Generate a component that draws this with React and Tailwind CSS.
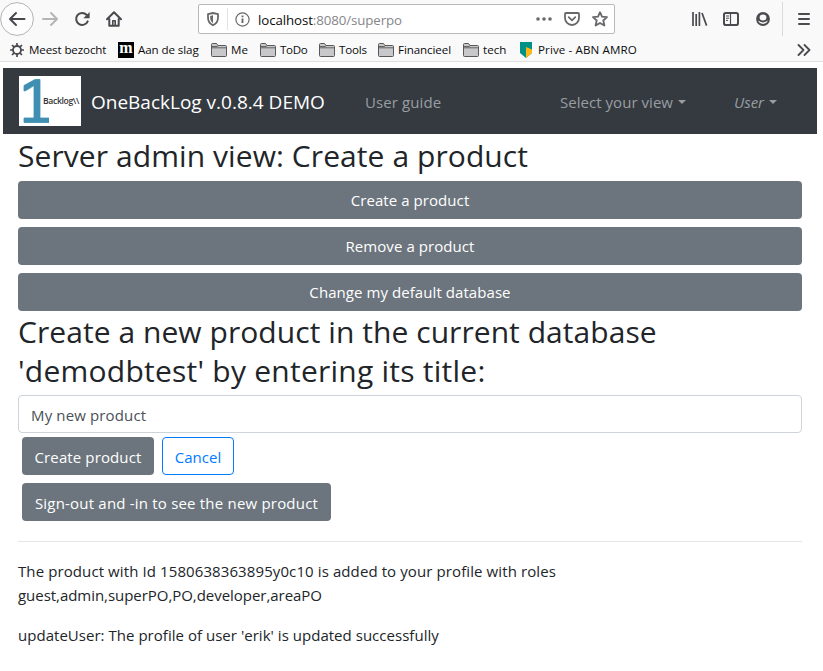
import React from "react";

const ui = "font-['Open_Sans','Noto_Sans',sans-serif]";

function Folder() {
  return (
    <svg width="16" height="14" viewBox="0 0 16 14" className="shrink-0">
      <path d="M.5 12.5V1.5Q.5.5 1.5.5H5.5L7 2.5H14.5Q15.5 2.5 15.5 3.5V12.5Q15.5 13.5 14.5 13.5H1.5Q.5 13.5.5 12.5Z" fill="#c8c8ca" stroke="#58585a" />
      <path d="M1 3.5H6L7.2 2.8M1 4.8H15" fill="none" stroke="#58585a" strokeWidth=".9" />
    </svg>
  );
}

function Gear() {
  return (
    <svg width="14" height="14" viewBox="0 0 14 14" className="shrink-0" fill="none" stroke="#4a4a4f">
      <circle cx="7" cy="7" r="4" strokeWidth="1.8" />
      <path d="M7 0V3M7 11V14M0 7H3M11 7H14M2 2L4.2 4.2M9.8 9.8L12 12M12 2L9.8 4.2M4.2 9.8L2 12" strokeWidth="1.7" />
    </svg>
  );
}

function Mozilla() {
  return (
    <span className="flex h-4 w-4 shrink-0 items-center justify-center bg-black font-['Liberation_Serif',serif] text-[16px] leading-4 font-bold text-white">
      <span className="-mt-[3px]">m</span>
    </span>
  );
}

function Bank() {
  return (
    <svg width="12" height="16" viewBox="0 0 12 16" className="mr-0.5 shrink-0">
      <path d="M0 0H12V11L6 16L0 11Z" fill="#009286" />
      <path d="M6 5L12 7.5V11L6 16Z" fill="#ffb718" />
    </svg>
  );
}

function Bookmark({ icon, label, box, text }) {
  return (
    <div className={`flex shrink-0 items-center gap-1 ${box}`}>
      {icon}
      <span className={`whitespace-nowrap ${text}`}>{label}</span>
    </div>
  );
}

function BrowserChrome() {
  return (
    <header className="h-[62px] border-b border-[#e0e0e1] bg-[#f9f9fa] text-[#0c0c0d]">
      <div className="flex h-[38px] items-center">
        <svg width="34" height="36" viewBox="0 0 34 36" className="shrink-0" fill="none">
          <circle cx="17" cy="18" r="16.4" fill="#fdfdfd" stroke="#b4b4b6" />
          <path d="M24.5 18H10M16 12L10 18L16 24" stroke="#48484c" strokeWidth="2" strokeLinecap="round" strokeLinejoin="round" />
        </svg>
        <svg width="16" height="16" viewBox="0 0 16 16" className="ml-2 shrink-0" fill="none" stroke="#b5b5b7" strokeWidth="2" strokeLinecap="round" strokeLinejoin="round">
          <path d="M1 8H15M9 2L15 8L9 14" />
        </svg>
        <svg width="16" height="16" viewBox="0 0 16 16" className="ml-4 shrink-0" fill="none">
          <path d="M13.7 10.3A6 6 0 1 1 12.5 3.8" stroke="#4a4a4f" strokeWidth="2" strokeLinecap="round" />
          <path d="M15.6 1V7.2H9.4Z" fill="#4a4a4f" />
        </svg>
        <svg width="16" height="16" viewBox="0 0 16 16" className="ml-4 shrink-0" fill="none" stroke="#4a4a4f" strokeWidth="2" strokeLinejoin="round" strokeLinecap="round">
          <path d="M1 8.3L8 1.3L15 8.3M3.3 8V14.7H12.7V8" />
          <path d="M6.8 14V9.7H9.2V14" strokeWidth="1.6" />
        </svg>
        <div className="ml-[76px] flex h-[30px] w-[417px] items-center rounded-[2px] border border-[#b9b9bb] bg-white">
          <svg width="12" height="14" viewBox="0 0 12 14" className="ml-2 shrink-0">
            <path d="M6 1L11 2.2V5.5C11 9.5 8.8 12 6 13.2C3.2 12 1 9.5 1 5.5V2.2Z" fill="white" stroke="#68686b" strokeWidth="1.8" strokeLinejoin="round" />
            <path d="M6 3.2V11C4 9.8 3.2 8 3.2 5.5V3.9Z" fill="#68686b" />
          </svg>
          <span className="ml-2 h-[22px] w-px bg-[#e2e2e3]" />
          <svg width="15" height="15" viewBox="0 0 15 15" className="ml-[7px] shrink-0" fill="none" stroke="#68686b">
            <circle cx="7.5" cy="7.5" r="6.6" strokeWidth="1.2" />
            <path d="M7.5 6.5V11M7.5 3.6V5.3" strokeWidth="1.9" />
          </svg>
          <span className="ml-2 w-[200px] pt-px text-[13.3px] tracking-[-0.1px] whitespace-nowrap">
            localhost<span className="text-[#86868a]">:8080/superpo</span>
          </span>
          <svg width="16" height="4" viewBox="0 0 16 4" className="mr-[12px] ml-auto shrink-0" fill="#68686b">
            <circle cx="2" cy="2" r="1.8" />
            <circle cx="8" cy="2" r="1.8" />
            <circle cx="14" cy="2" r="1.8" />
          </svg>
          <svg width="16" height="14" viewBox="0 0 16 14" className="mr-3 shrink-0" fill="none" stroke="#68686b" strokeWidth="1.8" strokeLinecap="round" strokeLinejoin="round">
            <path d="M2 1H14Q15 1 15 2V6A7 7 0 0 1 1 6V2Q1 1 2 1Z" />
            <path d="M4.7 5.2L8 8.3L11.3 5.2" />
          </svg>
          <svg width="16" height="16" viewBox="0 0 16 16" className="mr-[6px] shrink-0" fill="none" stroke="#68686b" strokeWidth="1.8" strokeLinejoin="round">
            <path d="M8 1.2L10 5.7L15 6.2L11.3 9.5L12.4 14.5L8 11.9L3.6 14.5L4.7 9.5L1 6.2L6 5.7Z" />
          </svg>
        </div>
        <svg width="16" height="14" viewBox="0 0 16 14" className="ml-[77px] shrink-0" fill="none" stroke="#4a4a4f" strokeWidth="1.7">
          <path d="M1 0V14M4.2 2V14M7.4 0V14M10 1L14.6 13.6" />
        </svg>
        <svg width="16" height="14" viewBox="0 0 16 14" className="ml-[15px] shrink-0" fill="none" stroke="#4a4a4f">
          <rect x="1" y="1" width="14" height="12" rx="1.8" strokeWidth="2" />
          <path d="M7.5 1V13" strokeWidth="1.2" />
          <path d="M3 4H6M3 6.2H6M3 8.4H5" />
        </svg>
        <svg width="14" height="14" viewBox="0 0 14 14" className="ml-[17px] shrink-0">
          <circle cx="7" cy="7" r="6.9" fill="#4a4a4f" />
          <ellipse cx="7" cy="5.4" rx="3.4" ry="3" fill="#f9f9fa" />
          <path d="M2.2 8.6Q4 10.4 7 10.4Q10 10.4 11.8 8.6Q10.8 11.8 7 12Q3.2 11.8 2.2 8.6Z" fill="#f9f9fa" />
        </svg>
        <span className="ml-[12px] h-[34px] w-px bg-[#dadadb]" />
        <svg width="12" height="14" viewBox="0 0 12 14" className="ml-[15px] shrink-0" stroke="#4a4a4f" strokeWidth="2" strokeLinecap="round">
          <path d="M1 2H11M1 7H11M1 12H11" />
        </svg>
      </div>
      <nav className="flex h-[23px] items-center pl-[10px] text-[11.6px]">
        <Bookmark icon={<Gear />} label="Meest bezocht" box="w-[108px]" text="pl-px tracking-[-0.12px]" />
        <Bookmark icon={<Mozilla />} label="Aan de slag" box="w-[93px]" text="tracking-[-0.1px]" />
        <Bookmark icon={<Folder />} label="Me" box="w-[49px]" text="" />
        <Bookmark icon={<Folder />} label="ToDo" box="w-[59px]" text="tracking-[-0.3px]" />
        <Bookmark icon={<Folder />} label="Tools" box="w-[59px]" text="tracking-[-0.2px]" />
        <Bookmark icon={<Folder />} label="Financieel" box="w-[85px]" text="tracking-[-0.1px]" />
        <Bookmark icon={<Folder />} label="tech" box="w-[57px]" text="" />
        <Bookmark icon={<Bank />} label="Prive - ABN AMRO" box="w-[130px]" text="tracking-[0.1px]" />
        <svg width="14" height="12" viewBox="0 0 14 12" className="mr-3 ml-auto shrink-0" fill="none" stroke="#4a4a4f" strokeWidth="1.8" strokeLinecap="round" strokeLinejoin="round">
          <path d="M1.5 1L6.5 6L1.5 11M7.5 1L12.5 6L7.5 11" />
        </svg>
      </nav>
    </header>
  );
}

function Caret() {
  return <span className="ml-[5px] h-0 w-0 border-x-4 border-t-4 border-x-transparent border-t-[#9a9da0]" />;
}

function Navbar() {
  return (
    <nav className="mt-[6px] mr-[6px] ml-[3px] flex h-[66px] items-center bg-[#343a40] pl-4 text-[15px] text-[#9a9da0]">
      <div className="flex h-[50px] w-[62px] shrink-0 items-center bg-white">
        <svg width="26" height="50" viewBox="0 0 26 50" className="ml-1 shrink-0">
          <path d="M1 15V9.5L12 3.5H17V42H26V46.5H1V42H11V9.5L3 14.5Z" fill="#3f8fb2" stroke="#3f8fb2" strokeWidth=".8" strokeLinejoin="round" />
        </svg>
        <span className="-ml-[6px] font-['Open_Sans',sans-serif] text-[8.6px] font-semibold tracking-[-0.34px] whitespace-nowrap text-[#333]">
          {"Backlog\\\\"}
        </span>
      </div>
      <span className="ml-[10px] w-[274px] pt-0.5 text-[19px] whitespace-nowrap text-white">OneBackLog v.0.8.4 DEMO</span>
      <a className="w-[195px] pt-0.5 tracking-[0.1px] whitespace-nowrap">User guide</a>
      <a className="flex w-[174px] items-center pt-0.5 tracking-[0.04px] whitespace-nowrap">
        Select your view
        <Caret />
      </a>
      <a className="flex items-center pt-0.5 whitespace-nowrap">
        <em>User</em>
        <Caret />
      </a>
    </nav>
  );
}

const solid = "rounded-[4px] bg-[#6c757d] text-white h-[38px] flex items-center justify-center whitespace-nowrap";

export default function App() {
  return (
    <div className={`h-[671px] w-[823px] overflow-hidden bg-white text-[15px] leading-6 text-[#212529] ${ui}`}>
      <BrowserChrome />
      <Navbar />
      <main className="mr-[21px] ml-[18px]">
        <h2 className="h-[47px] pt-[3px] text-[30px] leading-[38.4px] tracking-[0.08px] whitespace-nowrap">Server admin view: Create a product</h2>
        <div className="flex flex-col gap-2 tracking-[0.07px]">
          <button className={solid}>Create a product</button>
          <button className={solid}>Remove a product</button>
          <button className={solid}>Change my default database</button>
        </div>
        <h2 className="h-[84px] pt-[2px] text-[30px] leading-[38.8px] tracking-[0.06px] whitespace-nowrap">
          Create a new product in the current database
          <br />
          <span className="tracking-[0.24px]">'demodbtest' by entering its title:</span>
        </h2>
        <div className="flex h-[38px] items-center rounded-[4px] border border-[#ced4da] px-3 pt-0.5 tracking-[0.14px] text-[#495057]">My new product</div>
        <div className="mt-1 ml-1 flex gap-2">
          <button className={`${solid} w-[132px] pt-0.5 tracking-[0.12px]`}>Create product</button>
          <button className="h-[38px] w-[72px] rounded-[4px] border border-[#007bff] pt-0.5 text-[#007bff]">Cancel</button>
        </div>
        <button className={`${solid} mt-2 ml-1 w-[309px] pt-0.5 tracking-[0.2px]`}>Sign-out and -in to see the new product</button>
        <hr className="mt-5 border-[#e5e5e5]" />
        <p className="mt-[17px] whitespace-nowrap">
          <span className="tracking-[0.1px]">The product with Id 1580638363895y0c10 is added to your profile with roles</span>
          <br />
          <span className="tracking-[-0.04px]">guest,admin,superPO,PO,developer,areaPO</span>
        </p>
        <p className="mt-4 tracking-[0.03px] whitespace-nowrap">updateUser: The profile of user 'erik' is updated successfully</p>
      </main>
    </div>
  );
}
